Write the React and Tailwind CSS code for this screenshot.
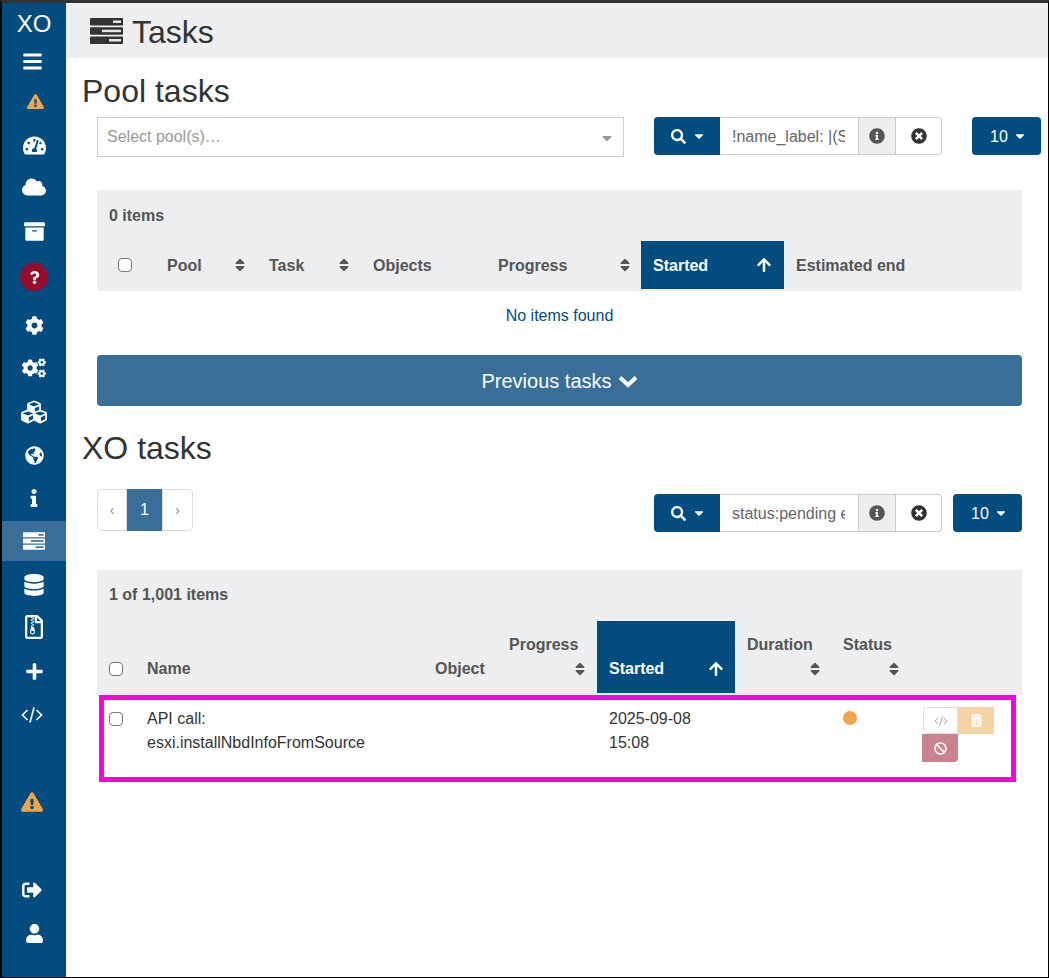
import React from "react";
import { FaBars, FaExclamationTriangle, FaTachometerAlt, FaCloud, FaArchive, FaQuestion, FaCog, FaCogs, FaCubes, FaGlobeAmericas, FaInfo, FaDatabase, FaRegFileArchive, FaPlus, FaSignOutAlt, FaUser, FaSearch, FaInfoCircle, FaTimesCircle, FaTrashAlt, FaBan, FaSort, FaArrowUp, FaCaretDown } from "react-icons/fa";

const Nav = ({ children, active, className = "" }) => (
  <div className={`h-[40px] shrink-0 flex items-center justify-center text-white text-[19px] ${active ? "bg-[#386e97]" : ""} ${className}`}>{children}</div>
);

const ServerIcon = ({ className, bar, slot }) => (
  <svg viewBox="0 0 33 26" className={className}>
    <rect x="0" y="0" width="33" height="7.5" rx="0.8" fill={bar} />
    <rect x="23" y="2.5" width="8" height="2.5" fill={slot} />
    <rect x="0" y="9.2" width="33" height="7.5" rx="0.8" fill={bar} />
    <rect x="12" y="11.7" width="19" height="2.5" fill={slot} />
    <rect x="0" y="18.5" width="33" height="7.5" rx="0.8" fill={bar} />
    <rect x="19" y="21" width="12" height="2.5" fill={slot} />
  </svg>
);

const CodeIcon = ({ className }) => (
  <svg viewBox="0 0 22 16" fill="none" stroke="currentColor" strokeWidth="1.6" className={className}>
    <path d="M6.5 3 L1.5 8 L6.5 13" />
    <path d="M15.5 3 L20.5 8 L15.5 13" />
    <path d="M13 0.5 L9 15.5" />
  </svg>
);

const Sort = ({ className = "" }) => <FaSort className={`text-[16px] text-[#555] ${className}`} />;

const FilterBar = ({ value }) => (
  <div className="flex h-[38px] w-[288px] text-[16px] text-[#555]">
    <div className="w-[66px] bg-[#034c7f] rounded-l pl-[2px] flex items-center justify-center gap-[6px] text-white">
      <FaSearch className="text-[15px]" /><FaCaretDown className="text-[14px]" />
    </div>
    <div className="w-[138px] border-y border-[#ccc] pl-3 pr-[13px] pt-[2px] flex items-center overflow-hidden whitespace-nowrap text-[#666]">
      <span className="block w-full overflow-hidden">{value}</span>
    </div>
    <div className="w-[38px] bg-[#eceef0] border border-[#ccc] flex items-center justify-center text-[16px]"><FaInfoCircle /></div>
    <div className="w-[46px] border-y border-r border-[#ccc] rounded-r flex items-center justify-center text-[#333] text-[16px]"><FaTimesCircle /></div>
  </div>
);

const PerPage = () => (
  <div className="w-[69px] h-[38px] bg-[#034c7f] rounded pl-[4px] flex items-center justify-center gap-[5px] text-white text-[16px]">
    <span className="pt-[2px]">10</span><FaCaretDown className="text-[14px]" />
  </div>
);

const Th = ({ children, sort, className = "" }) => (
  <div className={`px-3 font-bold text-[#555] flex ${className}`}>
    <span>{children}</span>
    {sort}
  </div>
);

const rows2 = "grid grid-cols-[38px_288px_74px_100px_138px_96px_80px_111px]";

export default function App() {
  return (
    <div className="relative w-[1049px] h-[978px] flex border-t-[3px] border-t-[#333] border-l-2 border-l-black border-r border-r-black border-b border-b-black bg-white overflow-hidden text-[16px] leading-6 text-[#333] font-['Liberation_Sans',Arial,sans-serif]">
      <aside className="w-[64px] shrink-0 bg-[#034c7f] flex flex-col overflow-hidden">
        <div className="h-[37px] shrink-0 flex items-end justify-center text-white text-[24px] leading-[30px] pb-[1px]">XO</div>
        <Nav className="mt-[1px] pr-[4px]"><FaBars className="text-[21px]" /></Nav>
        <Nav><FaExclamationTriangle className="text-[#f0a54a] text-[17px] ml-[2px]" /></Nav>
        <Nav className="mt-[4px]"><FaTachometerAlt className="text-[23px]" /></Nav>
        <Nav className="mt-[2px]"><FaCloud className="text-[24px]" /></Nav>
        <Nav className="mt-[4px]"><FaArchive className="text-[21px]" /></Nav>
        <Nav className="mt-[6px]">
          <div className="w-[28px] h-[28px] rounded-full bg-[#970b2c] flex items-center justify-center"><FaQuestion className="text-[13px]" /></div>
        </Nav>
        <Nav className="mt-[8px]"><FaCog /></Nav>
        <Nav className="mt-[3px]"><FaCogs className="text-[24px]" /></Nav>
        <Nav className="mt-[4px] pr-[1px]"><FaCubes className="text-[26px]" /></Nav>
        <Nav className="mt-[3px]"><FaGlobeAmericas /></Nav>
        <Nav className="mt-[3px]"><FaInfo className="text-[18px]" /></Nav>
        <Nav active className="mt-[3px]"><ServerIcon className="w-[22px] h-[18px]" bar="#ffffff" slot="#386e97" /></Nav>
        <Nav className="mt-[4px]"><FaDatabase className="text-[22px]" /></Nav>
        <Nav className="mt-[2px]"><FaRegFileArchive className="text-[24px]" /></Nav>
        <Nav className="mt-[4px]"><FaPlus /></Nav>
        <Nav className="mt-[4px] pr-[4px]"><CodeIcon className="w-[22px] h-[16px]" /></Nav>
        <Nav className="mt-[47px] pr-[4px]"><FaExclamationTriangle className="text-[#f0a54a] text-[22px]" /></Nav>
        <Nav className="mt-[48px] pr-[4px]"><FaSignOutAlt className="text-[20px]" /></Nav>
        <Nav className="mt-[3px]"><FaUser /></Nav>
      </aside>

      <main className="flex-1 min-w-0">
        <header className="h-[55px] bg-[#eceef0] flex items-center pl-[24px] gap-[9px] text-[32px] text-[#333]">
          <ServerIcon className="w-[33px] h-[26px] mt-[1px]" bar="#333333" slot="#e4e6e8" />
          <span className="pt-[3px]">Tasks</span>
        </header>

        <h2 className="ml-[16px] mt-[16px] text-[32px] leading-[35px] text-[#333]">Pool tasks</h2>

        <div className="ml-[31px] mt-[8px] flex items-start">
          <div className="w-[527px] h-[40px] border border-[#ccc] pl-[9px] pr-[8px] flex items-center justify-between text-[#999]">
            <span>Select pool(s)…</span>
            <FaCaretDown className="text-[#999] text-[16px] mt-[2px]" />
          </div>
          <div className="ml-[30px]"><FilterBar value="!name_label: |(S" /></div>
          <div className="ml-[30px]"><PerPage /></div>
        </div>

        <section className="ml-[31px] mt-[33px] w-[925px]">
          <div className="bg-[#eceef0] h-[101px] flex flex-col">
            <div className="h-[51px] px-3 flex items-center font-bold text-[16px] text-[#555]">0 items</div>
            <div className="h-[48px] grid grid-cols-[58px_102px_104px_125px_155px_143px_238px] items-center">
              <div className="pl-[21px] flex"><span className="w-[14px] h-[14px] border border-[#767676] rounded-sm bg-white" /></div>
              <Th className="justify-between items-center pr-[9px] pt-[2px]" sort={<Sort className="-mt-[2px]" />}>Pool</Th>
              <Th className="justify-between items-center pr-[9px] pt-[2px]" sort={<Sort className="-mt-[2px]" />}>Task</Th>
              <Th className="pt-[2px]">Objects</Th>
              <Th className="justify-between items-center pr-[8px] pt-[2px]" sort={<Sort className="-mt-[2px]" />}>Progress</Th>
              <div className="h-[48px] bg-[#034c7f] px-3 pt-[2px] flex items-center justify-between font-bold text-white">Started<FaArrowUp className="text-[16px] -mt-[2px]" /></div>
              <Th className="pt-[2px]">Estimated end</Th>
            </div>
          </div>
          <div className="h-[48px] pt-[2px] flex items-center justify-center text-[#034c7f]">No items found</div>
          <div className="mt-[16px] h-[51px] bg-[#386e97] rounded flex items-center justify-center gap-[6px] text-white text-[20px]">
            Previous tasks
            <svg viewBox="0 0 20 13" fill="none" stroke="currentColor" strokeWidth="4" className="w-[20px] h-[13px] mt-[1px]"><path d="M2 2.5 L10 10 L18 2.5" /></svg>
          </div>
        </section>

        <h2 className="ml-[16px] mt-[25px] text-[32px] leading-[35px] text-[#333]">XO tasks</h2>

        <div className="ml-[31px] mt-[23px] w-[925px] flex items-start">
          <div className="flex h-[42px] w-[96px] text-[14px]">
            <div className="w-[30px] border border-[#ddd] rounded-l flex items-center justify-center text-[#888]">‹</div>
            <div className="w-[35px] bg-[#386e97] text-white flex items-center justify-center text-[16px]">1</div>
            <div className="w-[31px] border border-[#ddd] rounded-r flex items-center justify-center text-[#888]">›</div>
          </div>
          <div className="ml-auto mt-[5px] flex gap-[11px]">
            <FilterBar value="status:pending e" />
            <PerPage />
          </div>
        </div>

        <section className="ml-[31px] mt-[38px] w-[925px]">
          <div className="bg-[#eceef0] h-[125px] flex flex-col">
            <div className="h-[51px] px-3 pb-[1px] flex items-center font-bold text-[16px] text-[#555]">1 of 1,001 items</div>
            <div className={`h-[72px] ${rows2} items-stretch`}>
              <div className="pl-[12px] pb-[17px] flex items-end"><span className="w-[14px] h-[14px] border border-[#767676] rounded-sm bg-white" /></div>
              <Th className="items-end pb-[12px]">Name</Th>
              <Th className="items-end pb-[12px]">Object</Th>
              <Th className="flex-col justify-end pb-[16px]" sort={<div className="flex justify-end -mr-[3px] mt-[4px]"><Sort /></div>}>Progress</Th>
              <div className="bg-[#034c7f] pl-3 pr-[11px] pb-[12px] flex items-end justify-between font-bold text-white">Started<FaArrowUp className="text-[16px] mb-[4px]" /></div>
              <Th className="flex-col justify-end pb-[16px]" sort={<div className="flex justify-end -mr-[4px] mt-[4px]"><Sort /></div>}>Duration</Th>
              <Th className="flex-col justify-end pb-[16px]" sort={<div className="flex justify-end -mr-[3px] mt-[4px]"><Sort /></div>}>Status</Th>
              <div />
            </div>
          </div>
          <div className={`${rows2} h-[86px] pt-[12px] text-[#333]`}>
            <div className="pl-[12px] pt-[5px]"><span className="block w-[14px] h-[14px] border border-[#767676] rounded-sm bg-white" /></div>
            <div className="px-3">API call:<br />esxi.installNbdInfoFromSource</div>
            <div />
            <div />
            <div className="px-3">2025-09-08<br />15:08</div>
            <div />
            <div className="px-3 pt-[4px]"><span className="block w-[14px] h-[14px] rounded-full bg-[#f0a54a]" /></div>
            <div className="flex flex-wrap content-start w-[80px] ml-[11px]">
              <div className="w-[35px] h-[27px] ml-[1px] border border-[#ddd] rounded-l flex items-center justify-center text-[#aaa]"><CodeIcon className="w-[14px] h-[10px]" /></div>
              <div className="w-[36px] h-[27px] bg-[#f6d3a4] flex items-center justify-center text-white text-[13px]"><FaTrashAlt /></div>
              <div className="w-[36px] h-[28px] bg-[#cb828f] rounded-br-sm flex items-center justify-center text-white text-[13px]"><FaBan /></div>
            </div>
          </div>
        </section>
      </main>

      <div className="absolute left-[97px] top-[692px] w-[917px] h-[87px] border-[5px] border-[#ff00dd] pointer-events-none" />
    </div>
  );
}
